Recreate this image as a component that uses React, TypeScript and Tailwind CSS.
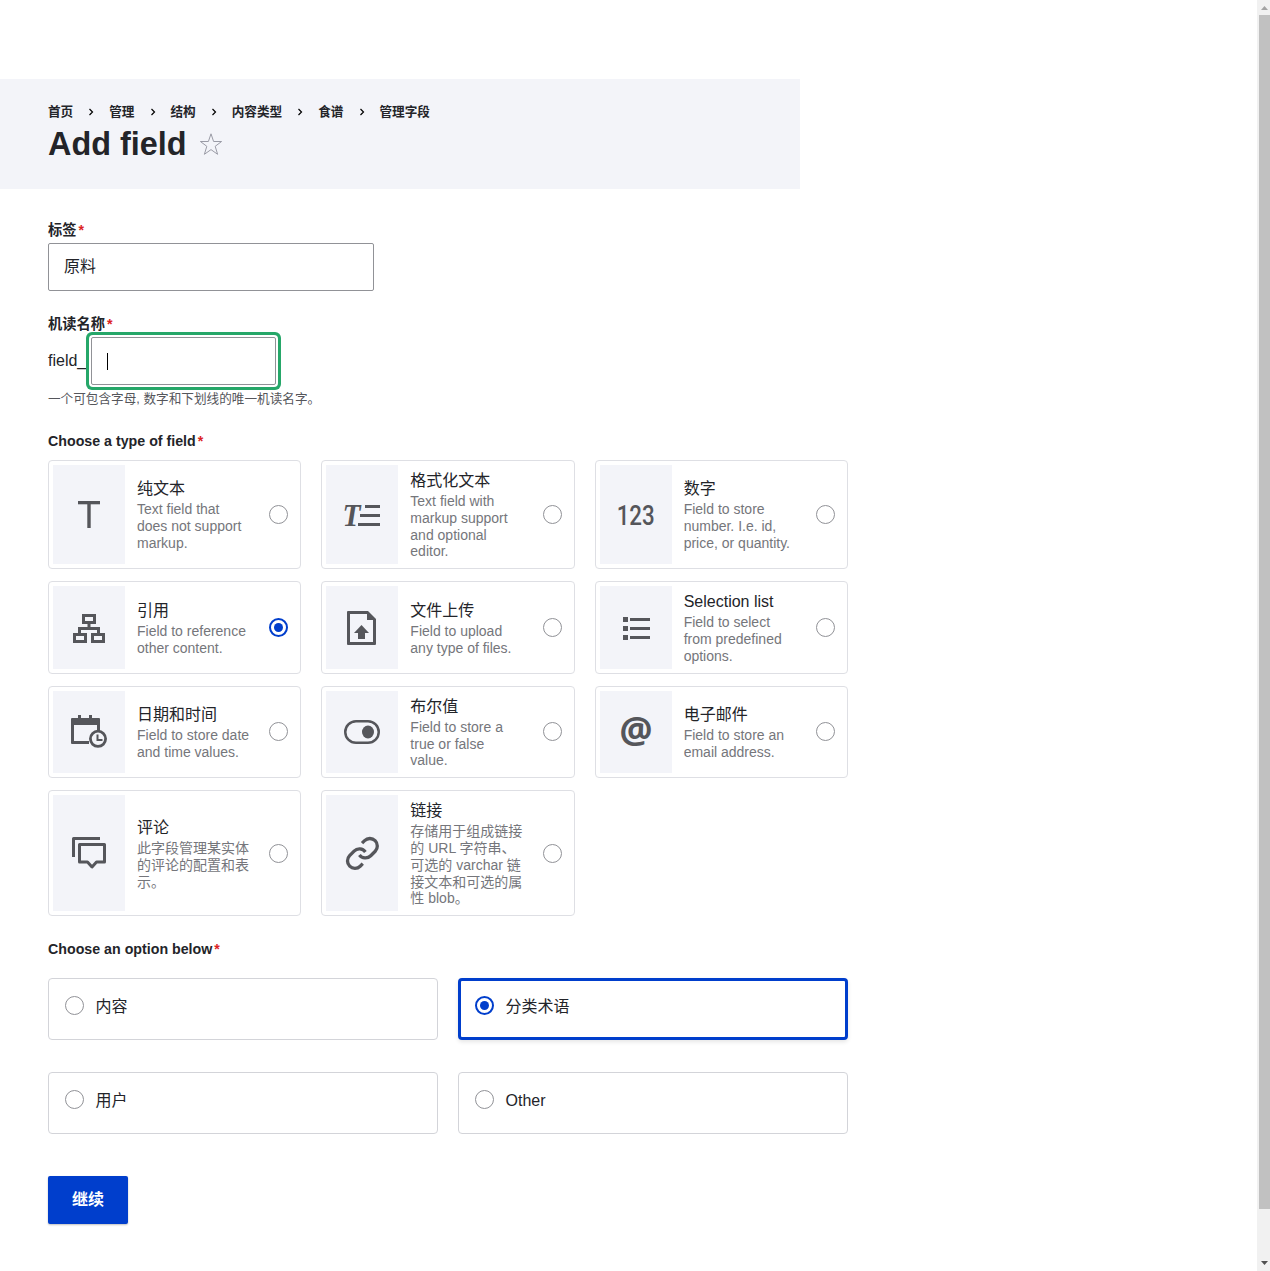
import type { ReactNode } from "react";

const FONT = "font-['Liberation_Sans','Noto_Sans_CJK_SC',sans-serif]";

function Required() {
  return <span className="ml-[2px] text-[#dc2323]">*</span>;
}

function Radio({ checked = false }: { checked?: boolean }) {
  return checked ? (
    <span className="grid size-[19px] shrink-0 place-items-center rounded-full border-2 border-[#003ecc] bg-white">
      <span className="size-[9px] rounded-full bg-[#003ecc]" />
    </span>
  ) : (
    <span className="size-[19px] shrink-0 rounded-full border border-[#919297] bg-white" />
  );
}

function Icon({ h = 36, children }: { h?: number; children: ReactNode }) {
  return (
    <svg width="36" height={h} viewBox={`0 0 36 ${h}`} fill="#55565b" overflow="visible">
      {children}
    </svg>
  );
}

const icons = {
  plain: (
    <Icon h={37}>
      <rect x="7" y="5" width="22" height="3.3" />
      <rect x="16.3" y="5" width="3.4" height="27" />
    </Icon>
  ),
  formatted: (
    <Icon h={37}>
      <text x="-1.500" y="30" fontFamily="Liberation Serif" fontStyle="italic" fontWeight="700" fontSize="32" textLength="18" lengthAdjust="spacingAndGlyphs">T</text>
      <rect x="21" y="9" width="15" height="3" />
      <rect x="16" y="18" width="20" height="3" />
      <rect x="14" y="27" width="22" height="3" />
    </Icon>
  ),
  number: (
    <Icon h={37}>
      <text x="-1.300" y="28.700" fontFamily="Roboto" fontWeight="500" fontSize="27.500" textLength="38" lengthAdjust="spacingAndGlyphs">123</text>
    </Icon>
  ),
  reference: (
    <Icon h={37}>
      <g fill="none" stroke="#55565b" strokeWidth="3">
        <rect x="12.5" y="6.5" width="11" height="7" />
        <rect x="3.5" y="25.5" width="11" height="7" />
        <rect x="21.5" y="25.5" width="11" height="7" />
        <path d="M18 15v4M8.5 24v-4.500h19v4.500" />
      </g>
    </Icon>
  ),
  upload: (
    <Icon h={37}>
      <path fillRule="evenodd" d="M4 2h20l8 8v25a1 1 0 0 1-1 1H4a1 1 0 0 1-1-1V3a1 1 0 0 1 1-1zM6 5v28h23V11h-6V5z" />
      <path d="M17.500 16l7.500 8h-4v6h-7v-6h-4z" />
    </Icon>
  ),
  list: (
    <Icon h={37}>
      {[8, 17, 26].map((y) => (
        <g key={y}>
          <rect x="5" y={y} width="5" height="5" />
          <rect x="12" y={y + 1} width="20" height="3" />
        </g>
      ))}
    </Icon>
  ),
  date: (
    <Icon>
      <path fillRule="evenodd" d="M7 1h3v3h8V1h3v3h7a1 1 0 0 1 1 1v12h-3v-6H3v16h15v3H1a1 1 0 0 1-1-1V5a1 1 0 0 1 1-1h6z" />
      <circle cx="27" cy="24.800" r="7.600" fill="#f3f4f9" stroke="#55565b" strokeWidth="2.800" />
      <path d="M26.500 20.500v5.500h5" fill="none" stroke="#55565b" strokeWidth="2" />
    </Icon>
  ),
  boolean: (
    <Icon>
      <rect x="1.250" y="7.250" width="33.500" height="21.500" rx="10.750" fill="none" stroke="#55565b" strokeWidth="2.500" />
      <ellipse cx="24" cy="18" rx="6" ry="6.500" />
    </Icon>
  ),
  email: (
    <Icon>
      <text x="1.500" y="30.300" fontFamily="Noto Sans" fontWeight="700" fontSize="38" textLength="33" lengthAdjust="spacingAndGlyphs">@</text>
    </Icon>
  ),
  comment: (
    <Icon>
      <path d="M2.500 22V3.500H29M8.500 9.500h25v17.500h-8l-4.500 5-4.500-5h-8z" fill="none" stroke="#55565b" strokeWidth="3" strokeLinejoin="round" />
    </Icon>
  ),
  link: (
    <Icon>
      <g transform="translate(.4 .4) scale(1.5)" fill="none" stroke="#55565b" strokeWidth="2.200">
        <path d="M10 13a5 5 0 0 0 7.540.54l3-3a5 5 0 0 0-7.070-7.070l-1.720 1.710" />
        <path d="M14 11a5 5 0 0 0-7.540-.54l-3 3a5 5 0 0 0 7.070 7.070l1.710-1.710" />
      </g>
    </Icon>
  ),
};

const fieldTypes = [
  { icon: icons.plain, title: "纯文本", text: "Text field that\ndoes not support\nmarkup." },
  { icon: icons.formatted, title: "格式化文本", text: "Text field with\nmarkup support\nand optional\neditor." },
  { icon: icons.number, title: "数字", text: "Field to store\nnumber. I.e. id,\nprice, or quantity." },
  { icon: icons.reference, title: "引用", text: "Field to reference\nother content.", checked: true },
  { icon: icons.upload, title: "文件上传", text: "Field to upload\nany type of files." },
  { icon: icons.list, title: "Selection list", text: "Field to select\nfrom predefined\noptions." },
  { icon: icons.date, title: "日期和时间", text: "Field to store date\nand time values." },
  { icon: icons.boolean, title: "布尔值", text: "Field to store a\ntrue or false\nvalue." },
  { icon: icons.email, title: "电子邮件", text: "Field to store an\nemail address." },
  { icon: icons.comment, title: "评论", text: "此字段管理某实体\n的评论的配置和表\n示。" },
  { icon: icons.link, title: "链接", text: "存储用于组成链接\n的 URL 字符串、\n可选的 varchar 链\n接文本和可选的属\n性 blob。" },
];

const options = [
  { title: "内容" },
  { title: "分类术语", checked: true },
  { title: "用户" },
  { title: "Other" },
];

const crumbs = ["首页", "管理", "结构", "内容类型", "食谱", "管理字段"];

export default function App() {
  return (
    <div className={`flex h-[1271px] w-[1270px] justify-between overflow-hidden bg-white text-[16px] text-[#232429] ${FONT}`}>
      <div className="w-[848px]">
        <header className="mt-[79px] h-[110px] w-[800px] bg-[#f3f4f9] pl-12 pt-[23px]">
          <nav className="flex h-5 items-center text-[12.64px] font-bold">
            {crumbs.map((c, i) => (
              <span key={c} className="flex items-center">
                {i > 0 && (
                  <svg className="mx-[14px]" width="8" height="8" viewBox="0 0 8 8" fill="none" stroke="#000" strokeWidth="1.200">
                    <path d="M2.500 1L5.500 4L2.500 7" />
                  </svg>
                )}
                {c}
              </span>
            ))}
          </nav>
          <div className="flex h-11 items-center">
            <h1 className="text-[32.4px] leading-[42px] font-bold">Add field</h1>
            <svg className="ml-3" width="24" height="24" viewBox="0 0 24 24" fill="none" stroke="#9a9ba6" strokeWidth="1">
              <path d="M12 1.800L14.600 9.500H22.600L16.200 14.300L18.600 22.300L12 17.600L5.400 22.300L7.800 14.300L1.400 9.500H9.400Z" />
            </svg>
          </div>
        </header>

        <main className="pl-12">
          <label className="mt-[31px] block h-[23px] text-[14.22px] leading-[21px] font-bold">
            标签<Required />
          </label>
          <div className="flex h-12 w-[326px] items-center rounded-[2px] border border-[#919297] px-[15px]">原料</div>

          <label className="mt-[23px] block h-[23px] text-[14.22px] leading-[21px] font-bold">
            机读名称<Required />
          </label>
          <div className="flex h-12 items-center">
            <span className="w-[43px]">field_</span>
            <div className="flex h-12 w-[185px] items-center rounded-[2px] border border-[#919297] bg-white px-[15px] shadow-[0_0_0_2px_#fff,0_0_0_5px_#26a769]">
              <span className="h-[17px] w-px bg-black" />
            </div>
          </div>
          <p className="mt-[5px] h-[18px] text-[12.64px] leading-[18px] text-[#55565b]">一个可包含字母, 数字和下划线的唯一机读名字。</p>

          <h2 className="mt-[23px] h-[29px] text-[14.22px] leading-[21px] font-bold">
            Choose a type of field<Required />
          </h2>
          <div className="grid grid-cols-3 grid-rows-[109px_92.9px_92px_126.4px] gap-x-5 gap-y-3">
            {fieldTypes.map((f) => (
              <div key={f.title} className="flex items-center rounded-[4px] border border-[#dedfe4] p-1 pr-3">
                <div className="grid h-full w-[72px] shrink-0 place-items-center bg-[#f3f4f9]">{f.icon}</div>
                <div className="ml-3 grow pt-px">
                  <div className="h-[23.2px] leading-[22px]">{f.title}</div>
                  <div className="text-[14px] leading-[16.8px] whitespace-pre text-[#75767b]">{f.text}</div>
                </div>
                <Radio checked={f.checked} />
              </div>
            ))}
          </div>

          <h2 className="mt-[23px] h-[38.7px] text-[14.22px] leading-[21px] font-bold">
            Choose an option below<Required />
          </h2>
          <div className="grid grid-cols-2 gap-x-5 gap-y-8">
            {options.map((o) => (
              <div
                key={o.title}
                className={`flex h-[62px] items-start rounded-[4px] ${
                  o.checked
                    ? "border-[3px] border-[#003ecc] pt-[15px] pl-[14px] shadow-[0_2px_4px_rgba(0,0,0,0.1)]"
                    : "border border-[#d3d4d9] pt-[17px] pl-4"
                }`}
              >
                <Radio checked={o.checked} />
                <span className="ml-[11.5px] leading-[22px]">{o.title}</span>
              </div>
            ))}
          </div>

          <button className="mt-[42px] h-12 w-20 rounded-[2px] bg-[#003ecc] text-[16px] font-bold text-white shadow-[0_1px_2px_rgba(0,0,0,0.25)]">
            继续
          </button>
        </main>
      </div>

      <div className="flex w-[13px] flex-col items-end bg-[#f1f1f1]">
        <svg width="13" height="15" viewBox="0 0 13 15" fill="#a3a3a3">
          <path d="M4 10h7L7.500 6z" />
        </svg>
        <div className="h-[1194px] w-[11px] bg-[#c1c1c1]" />
        <svg className="mt-auto" width="13" height="15" viewBox="0 0 13 15" fill="#505050">
          <path d="M4 5h7L7.500 9z" />
        </svg>
      </div>
    </div>
  );
}
